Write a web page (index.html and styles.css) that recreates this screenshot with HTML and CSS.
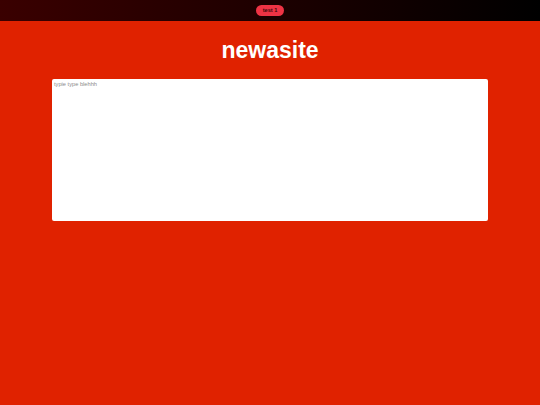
FILE: index.html
```html
<!DOCTYPE html>
<html>
<head>
<meta charset="utf-8">
<link rel="stylesheet" href="styles.css">
</head>
<body>
<header class="topbar">
  <span class="pill">test 1</span>
</header>
<main class="main">
  <h1 class="title">newasite</h1>
  <textarea class="editor" placeholder="typie type blehhh"></textarea>
</main>
</body>
</html>
```
FILE: styles.css
```css
html, body {
  margin: 0;
  padding: 0;
  height: 100%;
}
body {
  background: #e02200;
  font-family: "Liberation Sans", Arial, sans-serif;
}
.topbar {
  height: 21px;
  display: flex;
  align-items: center;
  justify-content: center;
  background: linear-gradient(to right, #3a0000, #000000);
}
.pill {
  display: inline-flex;
  align-items: center;
  justify-content: center;
  width: 28px;
  height: 11px;
  border-radius: 6px;
  background: #ee3344;
  color: #3a0a0a;
  font-size: 5.6px;
  font-weight: bold;
  margin-top: -1px;
}
.main {
  display: flex;
  flex-direction: column;
  align-items: center;
}
.title {
  margin: 16px 0 0 0;
  height: 42px;
  line-height: 27px;
  font-size: 23px;
  font-weight: bold;
  color: #ffffff;
}
.editor {
  box-sizing: border-box;
  width: 436px;
  height: 142px;
  margin: 0;
  border: none;
  border-radius: 2px;
  background: #ffffff;
  padding: 2px 2px;
  font-family: "Liberation Sans", Arial, sans-serif;
  font-size: 5.7px;
  resize: none;
  outline: none;
}
.editor::placeholder {
  color: #8a8a8a;
}
```
